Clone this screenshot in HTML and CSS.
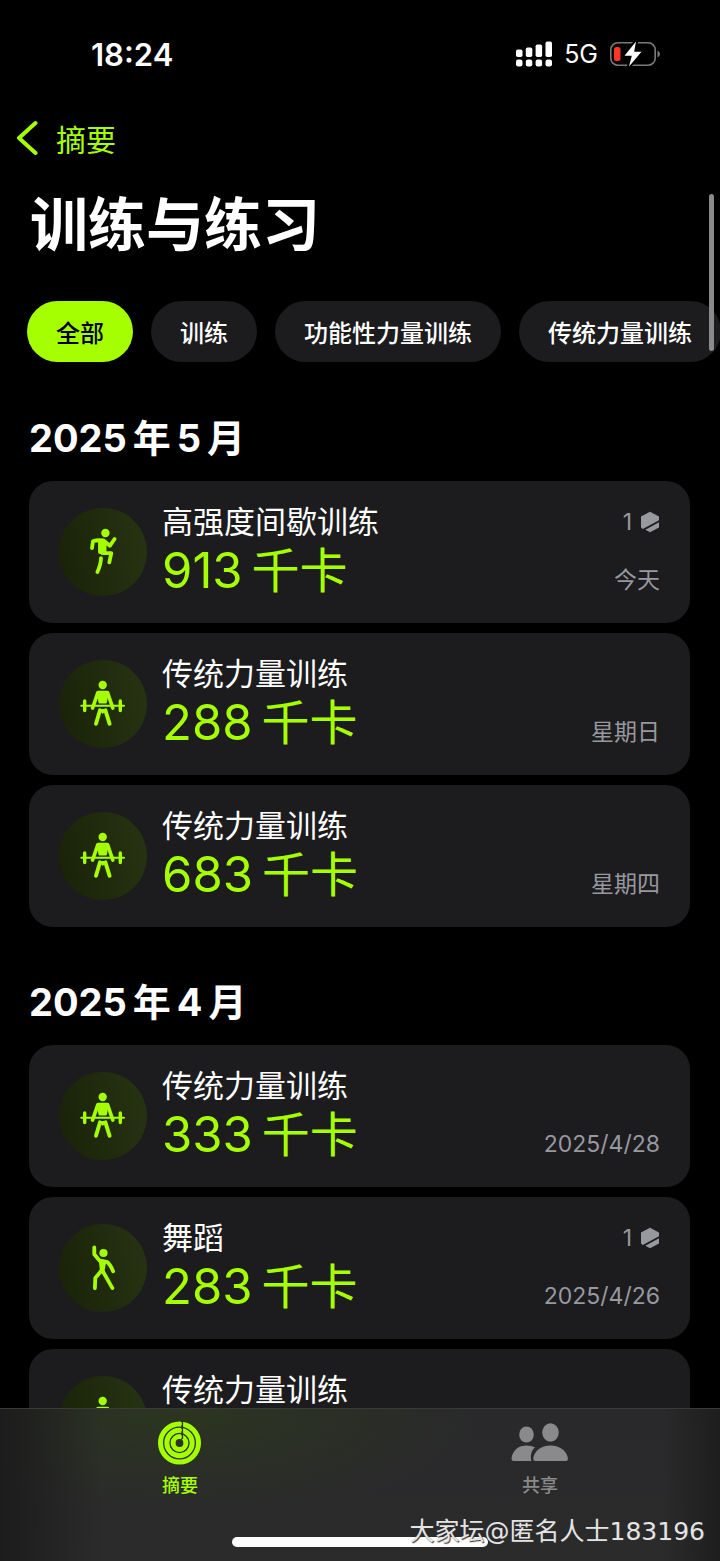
FILE: index.html
```
<!DOCTYPE html>
<html lang="zh-CN">
<head>
<meta charset="utf-8">
<meta name="viewport" content="width=device-width, initial-scale=1">
<title>训练与练习</title>
<link rel="stylesheet" href="styles.css">
</head>
<body>
<svg class="symbols" aria-hidden="true">
  <defs>
    <linearGradient id="disc" x1="0" y1="0.6" x2="1" y2="0.4">
      <stop offset="0" stop-color="#1a2308"/>
      <stop offset="1" stop-color="#263312"/>
    </linearGradient>
    <symbol id="strength" viewBox="0 0 88 88">
      <circle cx="44" cy="44" r="44" fill="url(#disc)"/>
      <g fill="#a6ff00" stroke="#a6ff00" stroke-linecap="round" stroke-linejoin="round">
        <circle cx="43.7" cy="25" r="4.2" stroke="none"/>
        <path d="M39.2 32.2h9l-1.600 9.800h-5.800z" stroke-width="2.8"/>
        <path d="M38.800 32.800L33.6 48M48.600 32.800L53.8 48" fill="none" stroke-width="3.7"/>
        <path d="M22.3 45.7H65" fill="none" stroke-width="1.9"/>
        <path d="M25.7 41v9.6M61.3 41v9.6" fill="none" stroke-width="3.4"/>
        <path d="M41 50.3L37 63.8M46.4 50.3L50.6 63.8" fill="none" stroke-width="3.9"/>
        <path d="M40.8 49.6h5.8l-2.9 3.4z" stroke-width="1.4"/>
      </g>
    </symbol>
    <symbol id="interval" viewBox="0 0 88 88">
      <circle cx="44" cy="44" r="44" fill="url(#disc)"/>
      <g fill="none" stroke="#a6ff00" stroke-width="3.8" stroke-linecap="round" stroke-linejoin="round">
        <circle cx="46.4" cy="25" r="4.2" fill="#a6ff00" stroke="none"/>
        <path d="M33 40l1-6.8q4-1.4 10.5-.7l6.3 5.3 4.8-6.8"/>
        <path d="M41 34h4.6v10h-4.6z" fill="#a6ff00"/>
        <path d="M43.5 45.2h8.8l-2 9.2"/>
        <path d="M42 50.2Q42 56 38.4 64"/>
      </g>
    </symbol>
    <symbol id="dance" viewBox="0 0 88 88">
      <circle cx="44" cy="44" r="44" fill="url(#disc)"/>
      <g fill="none" stroke="#a6ff00" stroke-width="3.8" stroke-linecap="round" stroke-linejoin="round">
        <circle cx="44.5" cy="29" r="4.1" fill="#a6ff00" stroke="none"/>
        <path d="M35.3 23.4v6.8l5 6.2 8.2 1.8q3 2.6 5.6 9"/>
        <path d="M41.2 37l4.6 1.4-1.6 8.4h-2z" fill="#a6ff00" stroke-width="2.6"/>
        <path d="M42.6 46.5l-6.3 7.4-.4 10.4M43.4 46.5l10 17.6"/>
      </g>
    </symbol>
    <symbol id="award" viewBox="0 0 20 22">
      <path d="M10 .7l9 4.800v3.700L2.800 18 1 16.500V5.500z"/>
      <path d="M19 11.300v5.200l-9 4.800-4.600-2.500z"/>
    </symbol>
  </defs>
</svg>

<div class="screen">
  <header class="status">
    <time class="clock">18:24</time>
    <div class="signals">
      <svg class="cell" viewBox="0 0 36 26" role="img" aria-label="信号">
        <g fill="#fff">
          <rect x="0" y="8.5" width="6.500" height="7.5" rx="1.8"/>
          <rect x="9.800" y="6.5" width="6.500" height="9.500" rx="1.800"/>
          <rect x="19.600" y="3.500" width="6.500" height="12.500" rx="1.800"/>
          <rect x="29.500" y="0.500" width="6.500" height="15.500" rx="1.800"/>
          <rect x="0" y="18.500" width="6.500" height="7" rx="2.200"/>
          <rect x="9.800" y="18.500" width="6.500" height="7" rx="2.200"/>
          <rect x="19.600" y="18.500" width="6.500" height="7" rx="2.200"/>
          <rect x="29.500" y="18.500" width="6.500" height="7" rx="2.200"/>
        </g>
      </svg>
      <span class="network">5G</span>
      <svg class="battery" viewBox="0 0 50 26" role="img" aria-label="正在充电">
        <rect x="0.800" y="1.800" width="44.400" height="22.400" rx="7" fill="none" stroke="#7b7b7b" stroke-width="1.600"/>
        <path d="M47.500 9.500q2.500 1 2.500 3.500t-2.500 3.500z" fill="#7b7b7b"/>
        <rect x="4" y="6" width="6.500" height="14" rx="2.500" fill="#ff3528"/>
        <path d="M26 .5L14.500 14.800h7.300L19 25.500l12.500-14.700h-7.300z" fill="#fff" stroke="#000" stroke-width="4" paint-order="stroke"/>
      </svg>
    </div>
  </header>

  <main class="content">
    <nav class="nav">
      <a class="back" href="#summary">
        <svg class="chevron" viewBox="0 0 22 36" aria-hidden="true"><path d="M19.500 3L3 18l16.500 15"/></svg>
        摘要
      </a>
    </nav>
    <h1 class="title">训练与练习</h1>

    <div class="chips">
      <button class="chip chip-active" type="button">全部</button>
      <button class="chip" type="button">训练</button>
      <button class="chip" type="button">功能性力量训练</button>
      <button class="chip" type="button">传统力量训练</button>
    </div>

    <section class="month">
      <h2 class="month-title"><span>2025</span><span>年</span><span>5</span><span>月</span></h2>
      <ul class="list">
        <li class="card">
          <svg class="disc" aria-hidden="true"><use href="#interval"/></svg>
          <div class="info">
            <p class="name">高强度间歇训练</p>
            <p class="value"><span>913</span><span class="unit">千卡</span></p>
          </div>
          <div class="meta">
            <span class="awards">1<svg class="award" aria-hidden="true"><use href="#award"/></svg></span>
            <span class="date">今天</span>
          </div>
        </li>
        <li class="card">
          <svg class="disc" aria-hidden="true"><use href="#strength"/></svg>
          <div class="info">
            <p class="name">传统力量训练</p>
            <p class="value"><span>288</span><span class="unit">千卡</span></p>
          </div>
          <div class="meta"><span class="date">星期日</span></div>
        </li>
        <li class="card">
          <svg class="disc" aria-hidden="true"><use href="#strength"/></svg>
          <div class="info">
            <p class="name">传统力量训练</p>
            <p class="value"><span>683</span><span class="unit">千卡</span></p>
          </div>
          <div class="meta"><span class="date">星期四</span></div>
        </li>
      </ul>
    </section>

    <section class="month">
      <h2 class="month-title"><span>2025</span><span>年</span><span>4</span><span>月</span></h2>
      <ul class="list">
        <li class="card">
          <svg class="disc" aria-hidden="true"><use href="#strength"/></svg>
          <div class="info">
            <p class="name">传统力量训练</p>
            <p class="value"><span>333</span><span class="unit">千卡</span></p>
          </div>
          <div class="meta"><span class="date">2025/4/28</span></div>
        </li>
        <li class="card">
          <svg class="disc" aria-hidden="true"><use href="#dance"/></svg>
          <div class="info">
            <p class="name">舞蹈</p>
            <p class="value"><span>283</span><span class="unit">千卡</span></p>
          </div>
          <div class="meta">
            <span class="awards">1<svg class="award" aria-hidden="true"><use href="#award"/></svg></span>
            <span class="date">2025/4/26</span>
          </div>
        </li>
        <li class="card">
          <svg class="disc" aria-hidden="true"><use href="#strength"/></svg>
          <div class="info">
            <p class="name">传统力量训练</p>
          </div>
        </li>
      </ul>
    </section>
  </main>
  <div class="scroll-thumb"></div>

  <footer class="tabbar">
    <nav class="tabs">
      <a class="tab tab-active" href="#summary">
        <svg class="tab-icon" viewBox="0 0 44 44" aria-hidden="true">
          <g fill="none" stroke="#a6ff00" stroke-width="5">
            <circle cx="21.500" cy="22" r="19"/>
            <circle cx="21.500" cy="22" r="12.700"/>
            <circle cx="21.500" cy="22" r="6.400"/>
          </g>
          <path d="M23.300 0q2.600 2.500 0 5.500M23.300 6.500q2.600 2.500 0 5.200M23.300 13q2.600 2.500 0 5.500M24.500 0v18" fill="none" stroke="#2b3321" stroke-width="1.200"/>
        </svg>
        摘要
      </a>
      <a class="tab" href="#sharing">
        <svg class="tab-icon tab-icon-wide" viewBox="0 0 58 44" aria-hidden="true">
          <g fill="#8a8a8c">
            <ellipse cx="15.500" cy="13.500" rx="7.300" ry="8"/>
            <ellipse cx="39.500" cy="11.500" rx="8.300" ry="9.300"/>
            <path d="M24 26.200C20.500 29.500 19 34 20.300 40H2.500Q.5 40 .5 37.500C1.500 29 8 24.500 15.500 24.500q5 0 8.500 1.700z"/>
            <path d="M24.500 40q-2.300 0-2.300-2.300C23 30 30 24.500 39.500 24.500S56 30 57 37.700q0 2.300-2.300 2.300z"/>
          </g>
        </svg>
        共享
      </a>
    </nav>
    <div class="home-indicator"></div>
    <p class="watermark">大家坛@匿名人士183196</p>
  </footer>
</div>
</body>
</html>
```
FILE: styles.css
```
* {
  box-sizing: border-box;
}

body {
  margin: 0;
  background: #000;
  color: #fff;
  font-family: Inter, "Noto Sans CJK SC", sans-serif;
}

h1, h2, p, ul {
  margin: 0;
  padding: 0;
}

a {
  color: inherit;
  text-decoration: none;
}

.symbols {
  position: absolute;
  width: 0;
  height: 0;
}

.screen {
  position: relative;
  display: flex;
  flex-direction: column;
  height: 100vh;
  overflow: hidden;
}

.status {
  display: flex;
  flex: none;
  align-items: center;
  justify-content: space-between;
  height: 108px;
  padding: 0 60px 0 91px;
}

.clock {
  font-size: 31px;
  font-weight: 600;
}

.signals {
  display: flex;
  align-items: center;
  gap: 12px;
}

.cell {
  width: 36px;
  height: 26px;
}

.network {
  font-size: 25px;
}

.battery {
  width: 50px;
  height: 26px;
}

.content {
  flex: 1;
  min-height: 0;
  overflow: hidden;
}

.nav {
  display: flex;
  padding: 0 16px;
}

.back {
  display: flex;
  align-items: center;
  gap: 18px;
  height: 60px;
  color: #a6ff00;
  font-size: 30px;
}

.chevron {
  width: 22px;
  height: 36px;
  fill: none;
  stroke: #a6ff00;
  stroke-width: 4;
  stroke-linecap: round;
  stroke-linejoin: round;
}

.title {
  padding: 17px 30px 36px;
  font-size: 58px;
  font-weight: 700;
  line-height: 80px;
}

.chips {
  display: flex;
  gap: 18px;
  padding: 0 27px 1px;
}

.chip {
  flex: none;
  height: 61px;
  padding: 0 29px;
  border: 0;
  border-radius: 31px;
  background: #1c1c1e;
  color: #fff;
  font-family: inherit;
  font-size: 24px;
  font-weight: 500;
}

.chip-active {
  background: #a6ff00;
  color: #000;
}

.month {
  padding: 49px 30px 0 29px;
}

.month-title {
  display: flex;
  align-items: baseline;
  gap: 6px;
  padding-bottom: 17px;
  font-size: 38px;
  font-weight: 700;
  line-height: 52px;
}

.list {
  display: flex;
  flex-direction: column;
  gap: 10px;
  list-style: none;
}

.card {
  display: flex;
  gap: 15px;
  min-height: 142px;
  padding: 22px 30px;
  border-radius: 24px;
  background: #1c1c1e;
}

.disc {
  flex: none;
  align-self: center;
  width: 88px;
  height: 88px;
}

.info {
  flex: 1;
}

.name {
  font-size: 31px;
  line-height: 38px;
}

.value {
  display: flex;
  align-items: baseline;
  gap: 9px;
  color: #a6ff00;
  font-size: 49px;
  line-height: 60px;
}

.unit {
  font-size: 48px;
  line-height: 48px;
}

.meta {
  display: flex;
  flex-direction: column;
  align-items: flex-end;
  color: #98989f;
  font-size: 23px;
  line-height: 38px;
}

.awards {
  display: flex;
  align-items: center;
  gap: 8px;
}

.award {
  width: 20px;
  height: 22px;
  fill: #98989f;
}

.date {
  margin-top: auto;
  padding-bottom: 2px;
}

.scroll-thumb {
  position: absolute;
  top: 194px;
  right: 6px;
  width: 5px;
  height: 157px;
  border-radius: 3px;
  background: #8a8a8b;
}

.tabbar {
  position: relative;
  flex: none;
  height: 153px;
  border-top: 1px solid #3a3a3b;
  background:
    linear-gradient(90deg, #1c1c1c 0%, transparent 14%, transparent 92%, #1e1e1e 100%),
    radial-gradient(ellipse 300px 110px at 25% 0, #2c3520, transparent),
    linear-gradient(#29292b, #2b2b2c);
}

.tabs {
  display: grid;
  grid-template-columns: 1fr 1fr;
}

.tab {
  display: flex;
  flex-direction: column;
  align-items: center;
  gap: 9px;
  padding-top: 12px;
  color: #8a8a8c;
  font-size: 18px;
  font-weight: 500;
  line-height: 24px;
}

.tab-active {
  color: #a6ff00;
}

.tab-icon {
  width: 44px;
  height: 44px;
}

.tab-icon-wide {
  width: 58px;
}

.home-indicator {
  position: absolute;
  bottom: 14px;
  left: 50%;
  width: 256px;
  height: 10px;
  margin-left: -128px;
  border-radius: 5px;
  background: #fff;
}

.watermark {
  position: absolute;
  right: 15px;
  bottom: 11px;
  color: #e4e4e4;
  font-family: "DejaVu Sans", "Noto Sans CJK SC", sans-serif;
  font-size: 25px;
  font-weight: 400;
  line-height: 36px;
  text-shadow: 1px 1px 1px #333;
}
```
